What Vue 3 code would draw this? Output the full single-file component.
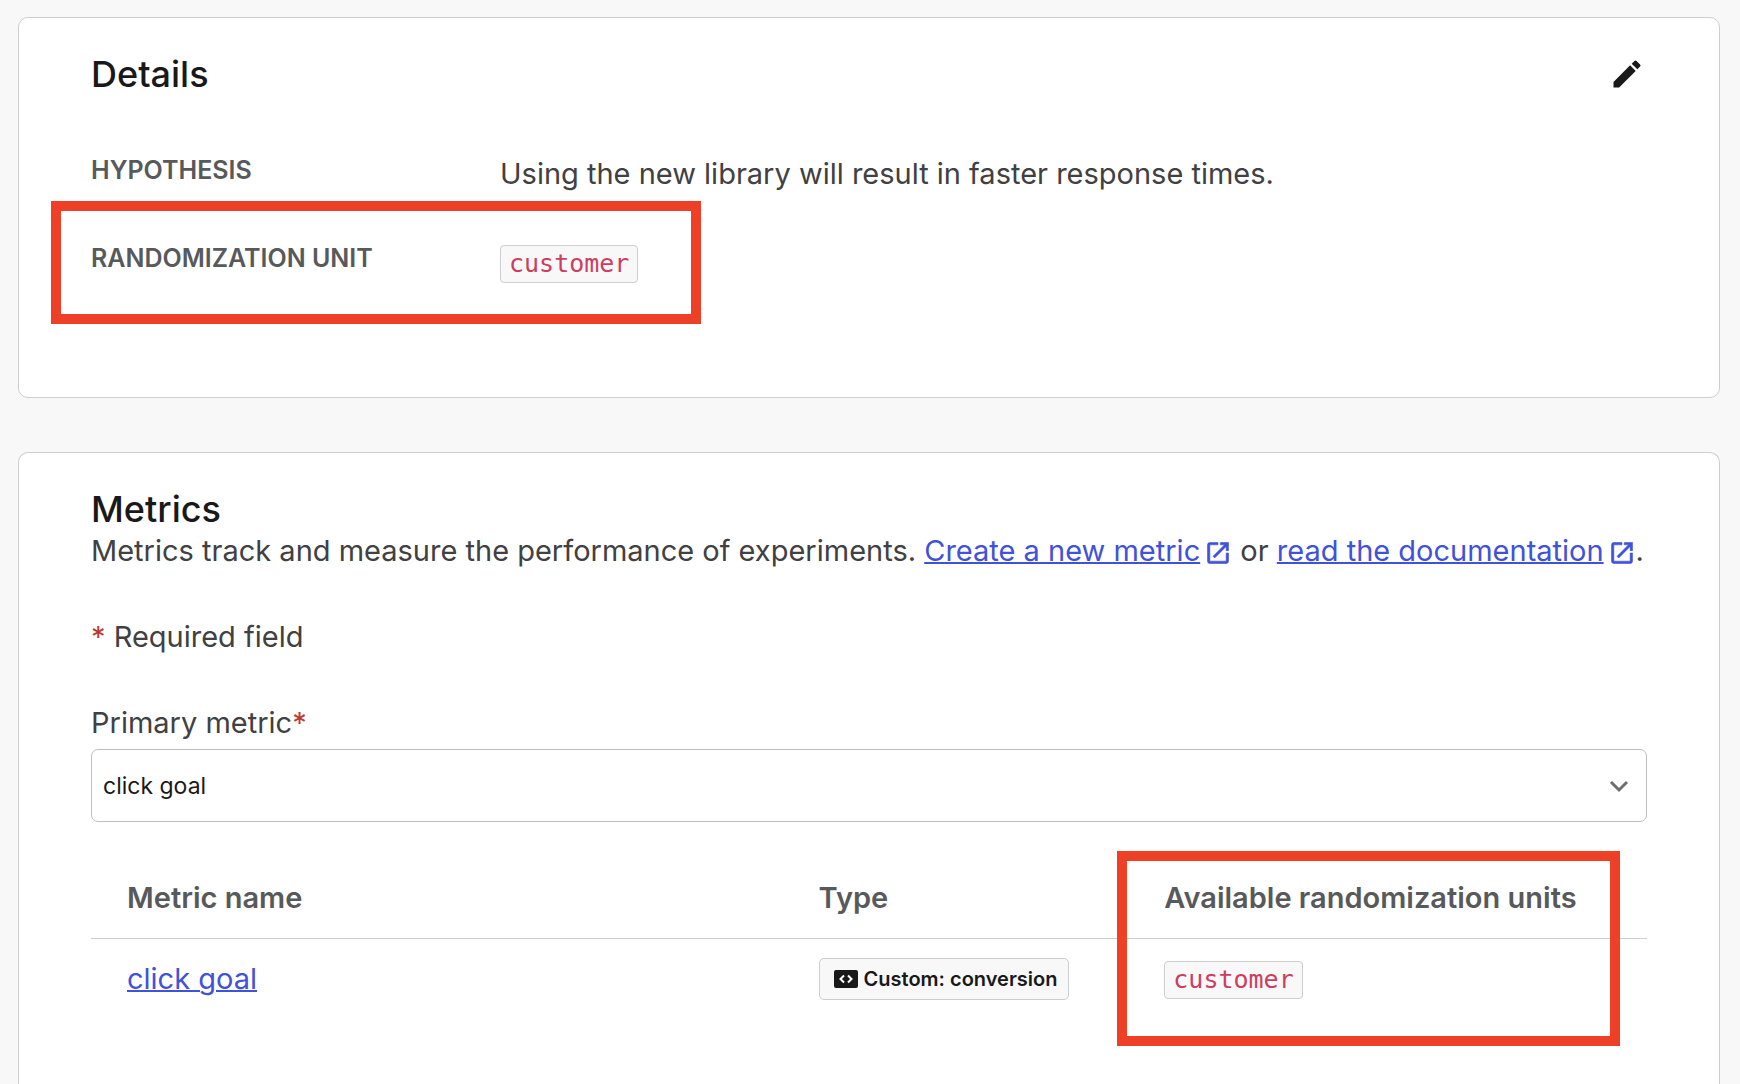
<script setup>
import { ref } from 'vue'

const metrics = [
  { name: 'click goal', type: 'Custom: conversion', unit: 'customer' },
]
const primaryMetric = ref(metrics[0].name)
</script>

<template>
  <main class="page">
    <section class="card">
      <header class="card-header">
        <h2>Details</h2>
        <button class="icon-button" type="button" aria-label="Edit details">
          <svg viewBox="0 0 24 24" aria-hidden="true">
            <path d="M3 17.25V21h3.75L17.81 9.94l-3.75-3.75L3 17.25zM20.71 7.04a1 1 0 0 0 0-1.41l-2.34-2.34a1 1 0 0 0-1.41 0l-1.83 1.83 3.75 3.75 1.83-1.83z" />
          </svg>
        </button>
      </header>
      <dl class="details">
        <div class="detail-row">
          <dt>HYPOTHESIS</dt>
          <dd>Using the new library will result in faster response times.</dd>
        </div>
        <div class="detail-row highlighted">
          <dt>RANDOMIZATION UNIT</dt>
          <dd><code>customer</code></dd>
        </div>
      </dl>
    </section>

    <section class="card metrics">
      <h2>Metrics</h2>
      <p>
        Metrics track and measure the performance of experiments.
        <a href="#create">Create a new metric</a><svg class="external" viewBox="0 0 24 24" aria-hidden="true"><path d="M19 19H5V5h7V3H5a2 2 0 0 0-2 2v14a2 2 0 0 0 2 2h14c1.1 0 2-.9 2-2v-7h-2v7zM14 3v2h3.59l-9.83 9.83 1.41 1.41L19 6.41V10h2V3h-7z" /></svg>
        or
        <a href="#docs">read the documentation</a><svg class="external" viewBox="0 0 24 24" aria-hidden="true"><path d="M19 19H5V5h7V3H5a2 2 0 0 0-2 2v14a2 2 0 0 0 2 2h14c1.1 0 2-.9 2-2v-7h-2v7zM14 3v2h3.59l-9.83 9.83 1.41 1.41L19 6.41V10h2V3h-7z" /></svg>.
      </p>
      <p class="required-note"><span class="star">*</span> Required field</p>

      <label for="primary-metric">Primary metric<span class="star">*</span></label>
      <div class="select-wrap">
        <select id="primary-metric" v-model="primaryMetric">
          <option v-for="m in metrics" :key="m.name">{{ m.name }}</option>
        </select>
        <svg class="chevron" viewBox="0 0 20 20" aria-hidden="true">
          <path d="M2 6l8 8 8-8" />
        </svg>
      </div>

      <table>
        <thead>
          <tr>
            <th class="col-name">Metric name</th>
            <th class="col-type">Type</th>
            <th>Available randomization units</th>
          </tr>
        </thead>
        <tbody>
          <tr v-for="m in metrics" :key="m.name">
            <td><a href="#metric">{{ m.name }}</a></td>
            <td>
              <span class="badge">
                <svg viewBox="0 0 24 20" aria-hidden="true">
                  <rect y="1" width="24" height="18" rx="2" />
                  <path d="M10 6.500l-3.500 3.500 3.500 3.500M14 6.500l3.500 3.500-3.500 3.500" />
                </svg>
                {{ m.type }}
              </span>
            </td>
            <td><code>{{ m.unit }}</code></td>
          </tr>
        </tbody>
      </table>
      <div class="units-highlight" aria-hidden="true"></div>
    </section>
  </main>
</template>

<style>
body {
  margin: 0;
  background: #f8f8f8;
}
</style>

<style scoped>
.page {
  box-sizing: border-box;
  min-height: 100vh;
  padding: 17px 20px 0 18px;
  display: flex;
  flex-direction: column;
  gap: 54px;
  font-family: Inter, "Liberation Sans", sans-serif;
  font-size: 29px;
  line-height: 40px;
  color: #414042;
}

.card {
  position: relative;
  padding: 34px 72px 0;
  border: 1px solid #cccecf;
  border-radius: 10px;
  background: #fff;
}

.metrics {
  flex: 1;
  padding-bottom: 80px;
  border-bottom: 0;
  border-radius: 10px 10px 0 0;
}

h2 {
  margin: 0;
  font-size: 36px;
  font-weight: 500;
  line-height: 44px;
  color: #191919;
}

.card-header {
  display: flex;
  justify-content: space-between;
  align-items: center;
}

.icon-button {
  display: flex;
  padding: 0 2px;
  border: 0;
  background: none;
}

.icon-button svg {
  width: 36px;
  height: 36px;
  fill: #191919;
}

.details {
  margin: 57px 0 0;
  padding-bottom: 68px;
}

.detail-row {
  position: relative;
  display: grid;
  grid-template-columns: 409px 1fr;
  margin-bottom: 46px;
}

.highlighted::after {
  content: "";
  position: absolute;
  left: -40px;
  top: -40px;
  box-sizing: border-box;
  width: 650px;
  height: 123px;
  border: 10px solid #ed4027;
}

dt {
  font-size: 25px;
  font-weight: 600;
  line-height: 34px;
  color: #58595b;
}

dd {
  margin: 0;
  line-height: 42px;
}

code {
  display: inline-block;
  padding: 0 8px;
  border: 1px solid #cccecf;
  border-radius: 4px;
  background: #f8f8f8;
  font-family: "DejaVu Sans Mono", monospace;
  font-size: 25px;
  line-height: 36px;
  color: #cd3e5f;
}

p {
  margin: 0;
}

a {
  color: #3f52d9;
  text-decoration-thickness: 2px;
}

.external {
  width: 28px;
  height: 28px;
  margin-left: 4px;
  vertical-align: -6px;
  fill: #3f52d9;
  stroke: #3f52d9;
  stroke-width: 0.5;
  stroke-linejoin: round;
}

.required-note {
  margin-top: 46px;
}

.star {
  color: #bc3a36;
}

label {
  display: block;
  margin-top: 46px;
}

.select-wrap {
  position: relative;
  margin-top: 6px;
}

select {
  appearance: none;
  display: block;
  width: 100%;
  height: 73px;
  padding: 0 48px 0 11px;
  border: 1px solid #bcbec0;
  border-radius: 7px;
  background: #fff;
  font-family: inherit;
  font-size: 23px;
  color: #191919;
}

.chevron {
  position: absolute;
  right: 18px;
  top: 27px;
  width: 20px;
  height: 20px;
  fill: none;
  stroke: #6d6e71;
  stroke-width: 3;
  pointer-events: none;
}

table {
  width: 100%;
  margin-top: 36px;
  border-collapse: collapse;
  table-layout: fixed;
}

th,
td {
  box-sizing: border-box;
}

.col-name {
  width: 44.4444%;
}

.col-type {
  width: 22.2222%;
}

th {
  padding: 20px 0 20px 36px;
  border-bottom: 1px solid #cccecf;
  text-align: left;
  font-weight: 600;
  color: #58595b;
  white-space: nowrap;
}

td {
  padding: 18px 0 18px 36px;
}

td code,
.badge {
  vertical-align: middle;
}

.badge {
  display: inline-flex;
  align-items: center;
  gap: 6px;
  padding: 0 11px 0 14px;
  border: 1px solid #cccecf;
  border-radius: 5px;
  background: #f8f8f8;
  font-size: 20px;
  font-weight: 600;
  color: #191919;
}

.badge svg {
  width: 24px;
  height: 20px;
  fill: #191919;
}

.badge path {
  fill: none;
  stroke: #fff;
  stroke-width: 2;
}

.units-highlight {
  position: absolute;
  top: 398px;
  right: 99px;
  box-sizing: border-box;
  width: 503px;
  height: 195px;
  border: 10px solid #ed4027;
}
</style>
